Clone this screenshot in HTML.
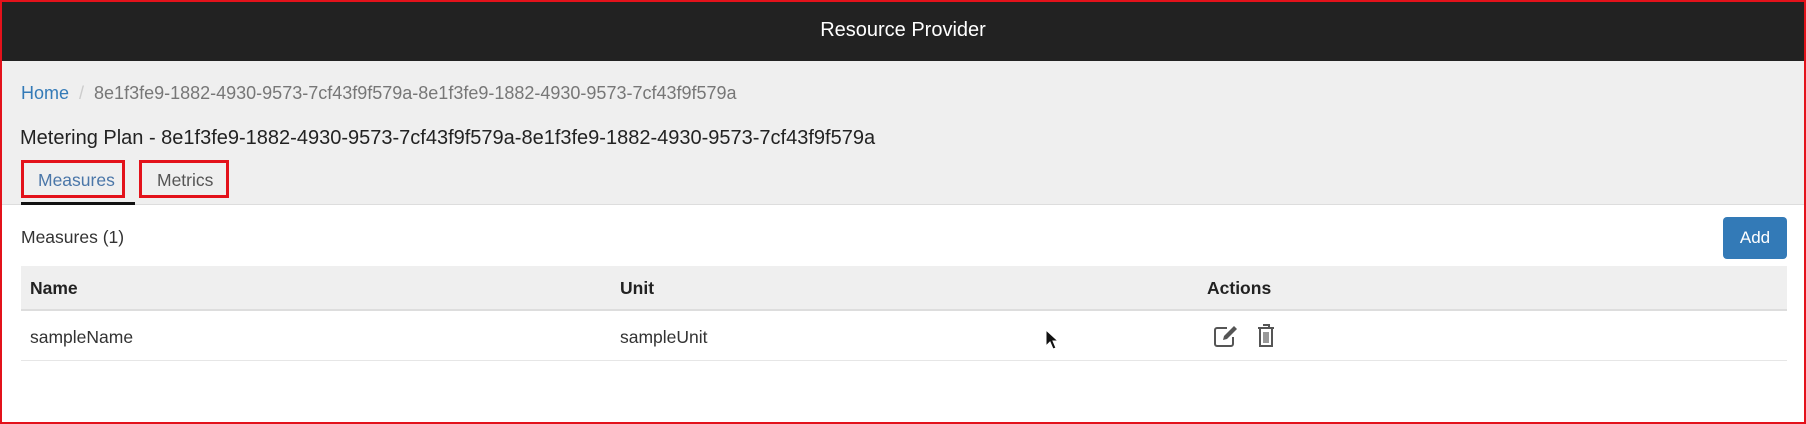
<!DOCTYPE html>
<html><head><style>
*{box-sizing:border-box;margin:0;padding:0}
body{width:1806px;height:424px;overflow:hidden;font-family:"Liberation Sans",Arial,sans-serif;background:#fff;position:relative}
.frame{position:absolute;inset:0;border:2px solid #e3121b;z-index:10;pointer-events:none}
.hdr{position:absolute;left:0;top:0;width:1806px;height:61px;background:#222;color:#fff;font-size:20px;text-align:center;line-height:60px}
.gray{position:absolute;left:0;top:61px;width:1806px;height:144px;background:#efefef;border-bottom:1px solid #ddd}
.abs{position:absolute;white-space:nowrap}
.box{position:absolute;border:3px solid #e3121b}
</style></head><body>
<div class="hdr">Resource Provider</div>
<div class="gray"></div>
<div class="abs" style="left:21px;top:83px;font-size:18px;color:#777"><span style="color:#337ab7">Home</span><span style="color:#ccc;padding:0 10px">/</span>8e1f3fe9-1882-4930-9573-7cf43f9f579a-8e1f3fe9-1882-4930-9573-7cf43f9f579a</div>
<div class="abs" style="left:20px;top:127px;font-size:20px;color:#222">Metering Plan - 8e1f3fe9-1882-4930-9573-7cf43f9f579a-8e1f3fe9-1882-4930-9573-7cf43f9f579a</div>
<div class="box" style="left:21px;top:160px;width:104px;height:38px"></div>
<div class="box" style="left:139px;top:160px;width:90px;height:38px"></div>
<div class="abs" style="left:38px;top:170px;font-size:17.5px;color:#4a76a8">Measures</div>
<div class="abs" style="left:157px;top:170px;font-size:17.5px;color:#555">Metrics</div>
<div class="abs" style="left:21px;top:202px;width:114px;height:3px;background:#111"></div>
<div class="abs" style="left:21px;top:227px;font-size:17.5px;color:#333">Measures (1)</div>
<div class="abs" style="left:1723px;top:217px;width:64px;height:42px;background:#337ab7;border-radius:4px;color:#fff;font-size:17px;text-align:center;line-height:42px">Add</div>
<div class="abs" style="left:21px;top:266px;width:1766px;height:45px;background:#efefef;border-bottom:2px solid #ddd"></div>
<div class="abs" style="left:30px;top:278px;font-size:17.5px;font-weight:bold;color:#222">Name</div>
<div class="abs" style="left:620px;top:278px;font-size:17.5px;font-weight:bold;color:#222">Unit</div>
<div class="abs" style="left:1207px;top:278px;font-size:17.5px;font-weight:bold;color:#222">Actions</div>
<div class="abs" style="left:21px;top:311px;width:1766px;height:50px;border-bottom:1px solid #e6e6e6"></div>
<div class="abs" style="left:30px;top:327px;font-size:17.5px;color:#333">sampleName</div>
<div class="abs" style="left:620px;top:327px;font-size:17.5px;color:#333">sampleUnit</div>
<svg class="abs" style="left:1213px;top:324px" width="28" height="24" viewBox="0 0 28 24"><path d="M14 4H4a2 2 0 0 0-2 2v14a2 2 0 0 0 2 2h14a2 2 0 0 0 2-2v-7" fill="none" stroke="#555" stroke-width="2"/><path d="M21 2l3 3-10 10-4 1 1-4z" fill="#555"/></svg>
<svg class="abs" style="left:1256px;top:323px" width="20" height="26" viewBox="0 0 20 26"><path d="M7 2h6v2M2 5h16M4 6v17h12V6" fill="none" stroke="#555" stroke-width="2"/><path d="M8 9v11M10 9v11M12 9v11" stroke="#555" stroke-width="1.2"/></svg>
<svg class="abs" style="left:1045px;top:329px" width="14" height="22" viewBox="0 0 14 22"><path d="M1 1v16l4-4 3 7 3-1-3-7h5z" fill="#111" stroke="#fff" stroke-width="1"/></svg>
<div class="frame"></div>
</body></html>
